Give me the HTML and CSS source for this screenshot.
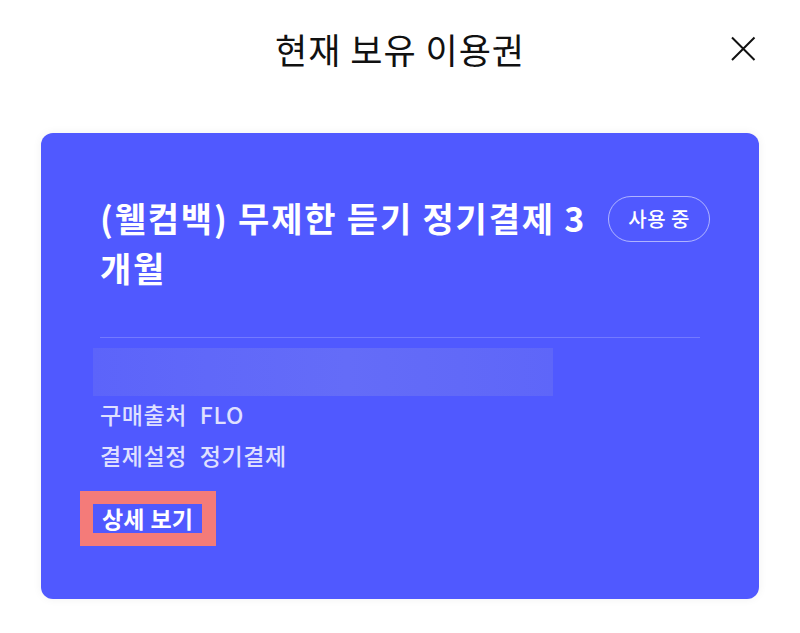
FILE: index.html
```html
<!DOCTYPE html>
<html>
<head>
    <meta charset="UTF-8" />
    <meta name="viewport" content="width=device-width, initial-scale=1.0" />
    <title>현재 보유 이용권</title>
    <link rel="stylesheet" href="styles.css">
</head>
<body>
    <div class="header">
        <h1 class="header-title">현재 보유 이용권</h1>
        <button class="close-btn" aria-label="닫기">
            <svg width="26" height="26" viewBox="0 0 26 26"><path d="M2 1.5 L24.5 24 M24.5 1.5 L2 24" stroke="#111" stroke-width="2" fill="none"/></svg>
        </button>
    </div>

    <div class="ticket-card">
        <div class="title-row">
            <h2 class="ticket-name">(웰컴백) 무제한 듣기 정기결제 3 개월</h2>
            <span class="status-badge">사용 중</span>
        </div>
        <div class="divider"></div>
        <div class="blur-bar"></div>
        <div class="info-row"><span class="info-label">구매출처</span> FLO</div>
        <div class="info-row"><span class="info-label">결제설정</span> 정기결제</div>
        <div class="detail-mark">
            <span class="detail-link">상세 보기</span>
        </div>
    </div>
</body>
</html>
```

FILE: styles.css
```css
body {
    margin: 0;
    background: #fff;
    font-family: "Noto Sans CJK KR", "Noto Sans", sans-serif;
    width: 800px;
    height: 633px;
    overflow: hidden;
}

.header {
    position: relative;
    height: 100px;
    display: flex;
    justify-content: center;
}
.header-title {
    margin: 25px 0 0;
    font-size: 35px;
    font-weight: 400;
    line-height: 48px;
    color: #111;
    letter-spacing: 1px;
}
.close-btn {
    position: absolute; /* sits over the header row */
    top: 36px;
    right: 44px;
    padding: 0;
    border: 0;
    background: none;
    line-height: 0;
}

.ticket-card {
    margin: 33px 41px 0;
    height: 466px;
    box-sizing: border-box;
    padding: 60px 59px 0;
    background: #5059ff;
    border-radius: 12px;
    box-shadow: 0 0 10px rgba(0, 0, 0, 0.06);
    color: #fff;
}

.title-row {
    display: flex;
    justify-content: space-between;
    align-items: flex-start;
}
.ticket-name {
    margin: 0;
    font-size: 34px;
    font-weight: 700;
    line-height: 50px;
    max-width: 500px;
    letter-spacing: 1.8px;
}
.status-badge {
    flex: none;
    margin: 3px -10px 0 0;
    height: 44px;
    line-height: 44px;
    padding: 0 19px;
    border: 1.5px solid rgba(255, 255, 255, 0.55);
    border-radius: 24px;
    font-size: 20px;
    font-weight: 500;
    letter-spacing: 0.5px;
}

.divider {
    margin-top: 44px;
    height: 1px;
    background: rgba(255, 255, 255, 0.2);
}

.blur-bar {
    margin: 10px 0 0 -7px;
    width: 460px;
    height: 48px;
    background: linear-gradient(90deg, #5c64fa 0%, #6068f9 25%, #646cf8 55%, #6169f8 80%, #5e66f9 100%);
}

.info-row {
    margin-top: -2px;
    margin-bottom: 2px;
    font-size: 23px;
    line-height: 41px;
    color: #dfe0ff;
    font-weight: 500;
    letter-spacing: 0.6px;
}
.info-label {
    margin-right: 7px;
}

.detail-mark {
    display: inline-block;
    margin: 13px 0 0 -20px;
    padding: 13px 14px 13px 13px;
    background: #f47b79;
}
.detail-link {
    display: block;
    padding: 0 9px;
    background: #5059ff;
    font-size: 23px;
    font-weight: 700;
    line-height: 29px;
    letter-spacing: 0;
    word-spacing: 1px;
}
```
